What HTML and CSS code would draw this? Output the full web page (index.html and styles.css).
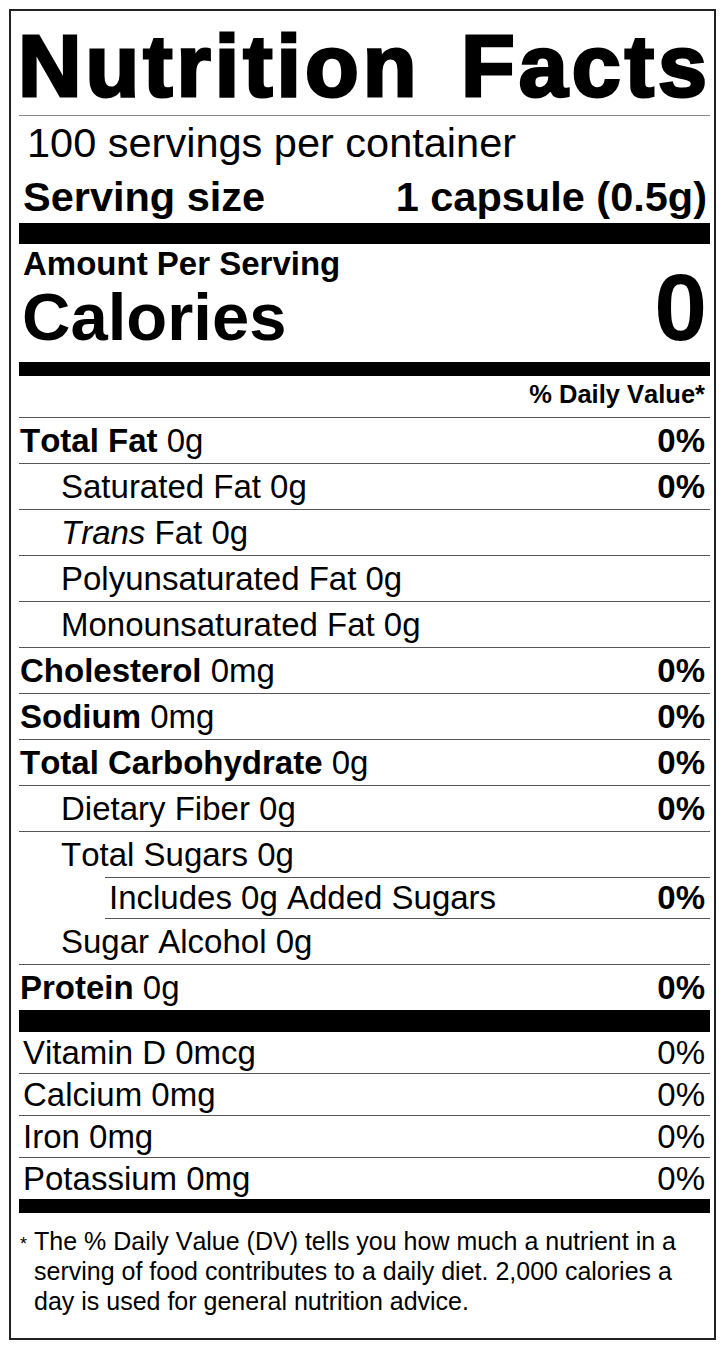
FILE: index.html
```html
<!DOCTYPE html>
<html lang="en">
<head>
<meta charset="utf-8">
<title>Nutrition Facts</title>
<link rel="stylesheet" href="styles.css">
</head>
<body>
<div class="label">
  <div class="title-wrap">
    <h1 class="title"><span>Nutrition</span><span>Facts</span></h1>
  </div>
  <div class="servings">100 servings per container</div>
  <div class="size"><span>Serving size</span><span>1 capsule (0.5g)</span></div>
  <div class="bar bar-lg"></div>
  <div class="amount">Amount Per Serving</div>
  <div class="cal-row"><span class="cal-label">Calories</span><span class="cal-val">0</span></div>
  <div class="bar bar-md"></div>
  <div class="dv-head">% Daily Value*</div>

  <div class="row"><span><b>Total Fat</b> 0g</span><b>0%</b></div>
  <div class="row indent"><span>Saturated Fat 0g</span><b>0%</b></div>
  <div class="row indent"><span><i>Trans</i> Fat 0g</span></div>
  <div class="row indent"><span>Polyunsaturated Fat 0g</span></div>
  <div class="row indent"><span>Monounsaturated Fat 0g</span></div>
  <div class="row"><span><b>Cholesterol</b> 0mg</span><b>0%</b></div>
  <div class="row"><span><b>Sodium</b> 0mg</span><b>0%</b></div>
  <div class="row"><span><b>Total Carbohydrate</b> 0g</span><b>0%</b></div>
  <div class="row indent"><span>Dietary Fiber 0g</span><b>0%</b></div>
  <div class="row indent no-line"><span>Total Sugars 0g</span></div>
  <div class="row sub"><span>Includes 0g Added Sugars</span><b>0%</b></div>
  <div class="row indent"><span>Sugar Alcohol 0g</span></div>
  <div class="row no-line"><span><b>Protein</b> 0g</span><b>0%</b></div>

  <div class="bar bar-lg2"></div>
  <div class="vrow"><span>Vitamin D 0mcg</span><span>0%</span></div>
  <div class="vrow"><span>Calcium 0mg</span><span>0%</span></div>
  <div class="vrow"><span>Iron 0mg</span><span>0%</span></div>
  <div class="vrow vlast"><span>Potassium 0mg</span><span>0%</span></div>
  <div class="bar bar-md"></div>

  <div class="foot">
    <span class="ast">*</span>
    <p class="foot-text">The % Daily Value (DV) tells you how much a nutrient in a<br>serving of food contributes to a daily diet. 2,000 calories a<br>day is used for general nutrition advice.</p>
  </div>
</div>
</body>
</html>
```
FILE: styles.css
```css
body {
  margin: 0;
  background: #fff;
  color: #000;
  font-family: "Liberation Sans", Arial, Helvetica, sans-serif;
  font-kerning: none;
}

.label {
  box-sizing: border-box;
  width: 707px;
  margin: 9px 0 0 9px;
  border: 2px solid #222;
  padding: 0 4px 0 8px;
}

.title-wrap {
  padding-top: 6px;
  height: 98px;
  border-bottom: 1px solid #888;
}

.title {
  margin: 0 -1px 0 -1px;
  display: flex;
  justify-content: space-between;
  font-size: 88px;
  line-height: 97px;
  font-weight: 700;
  letter-spacing: 4px;
  -webkit-text-stroke: 3px #000;
}

.servings {
  font-size: 41.5px;
  line-height: 54px;
  padding-left: 8px;
}

.size {
  display: flex;
  justify-content: space-between;
  font-size: 41.5px;
  font-weight: 700;
  line-height: 53px;
  padding: 0 3px 0 4px;
}

.bar {
  background: #000;
}

.bar-lg {
  height: 21px;
}

.bar-lg2 {
  height: 22px;
}

.bar-md {
  height: 14px;
}

.amount {
  font-size: 33px;
  font-weight: 700;
  line-height: 40px;
  padding-left: 4px;
}

.cal-row {
  display: flex;
  justify-content: space-between;
  align-items: flex-start;
  height: 78px;
  padding: 0 3px 0 3px;
}

.cal-label {
  font-size: 67px;
  font-weight: 700;
  line-height: 66px;
}

.cal-val {
  font-size: 95px;
  font-weight: 700;
  line-height: 46px;
}

.dv-head {
  text-align: right;
  font-size: 25.5px;
  font-weight: 700;
  line-height: 37px;
  padding: 0 5px 4px 0;
  border-bottom: 1px solid #555;
}

.row {
  display: flex;
  justify-content: space-between;
  height: 44px;
  padding: 1px 5px 0 1px;
  font-size: 33px;
  line-height: 44px;
  border-bottom: 1px solid #555;
  white-space: nowrap;
}

.row b {
  font-weight: 700;
}

.indent {
  padding-left: 42px;
}

.no-line {
  border-bottom: none;
}

.sub {
  margin-left: 86px;
  border-top: 1px solid #555;
  height: 40px;
  padding-top: 0;
  padding-left: 4px;
  line-height: 40px;
}

.vrow {
  display: flex;
  justify-content: space-between;
  height: 41px;
  padding: 0 5px 0 4px;
  font-size: 33px;
  line-height: 41px;
  border-bottom: 1px solid #555;
}

.vlast {
  border-bottom: none;
}

.foot {
  display: flex;
  align-items: baseline;
  padding: 13px 0 22px;
}

.ast {
  box-sizing: border-box;
  flex: 0 0 15px;
  padding-left: 1px;
  font-size: 18px;
}

.foot-text {
  margin: 0;
  font-size: 25px;
  line-height: 30px;
  white-space: nowrap;
}
```
